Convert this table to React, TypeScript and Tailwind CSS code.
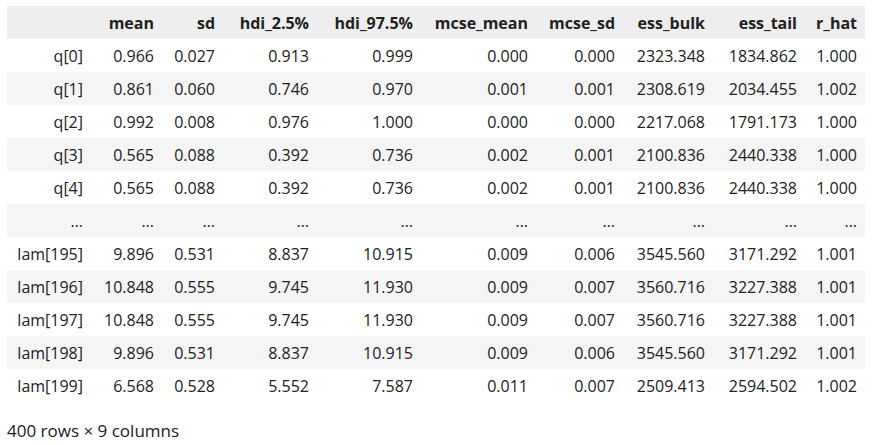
import React from 'react';

const columns = ['mean', 'sd', 'hdi_2.5%', 'hdi_97.5%', 'mcse_mean', 'mcse_sd', 'ess_bulk', 'ess_tail', 'r_hat'];

const widths = ['w-[84px]', 'w-[71px]', 'w-[61px]', 'w-[94px]', 'w-[104px]', 'w-[115px]', 'w-[87px]', 'w-[90px]', 'w-[92px]', 'w-[60px]'];

const rows: [string, string[]][] = [
  ['q[0]', ['0.966', '0.027', '0.913', '0.999', '0.000', '0.000', '2323.348', '1834.862', '1.000']],
  ['q[1]', ['0.861', '0.060', '0.746', '0.970', '0.001', '0.001', '2308.619', '2034.455', '1.002']],
  ['q[2]', ['0.992', '0.008', '0.976', '1.000', '0.000', '0.000', '2217.068', '1791.173', '1.000']],
  ['q[3]', ['0.565', '0.088', '0.392', '0.736', '0.002', '0.001', '2100.836', '2440.338', '1.000']],
  ['q[4]', ['0.565', '0.088', '0.392', '0.736', '0.002', '0.001', '2100.836', '2440.338', '1.000']],
  ['...', ['...', '...', '...', '...', '...', '...', '...', '...', '...']],
  ['lam[195]', ['9.896', '0.531', '8.837', '10.915', '0.009', '0.006', '3545.560', '3171.292', '1.001']],
  ['lam[196]', ['10.848', '0.555', '9.745', '11.930', '0.009', '0.007', '3560.716', '3227.388', '1.001']],
  ['lam[197]', ['10.848', '0.555', '9.745', '11.930', '0.009', '0.007', '3560.716', '3227.388', '1.001']],
  ['lam[198]', ['9.896', '0.531', '8.837', '10.915', '0.009', '0.006', '3545.560', '3171.292', '1.001']],
  ['lam[199]', ['6.568', '0.528', '5.552', '7.587', '0.011', '0.007', '2509.413', '2594.502', '1.002']],
];

export default function App() {
  return (
    <div className="min-h-screen bg-white pl-[7px] pt-[6px] text-[16px] text-[#222] font-['Open_Sans','Noto_Sans',sans-serif]">
      {/* Summary dataframe */}
      <table className="table-fixed w-[858px] border-collapse">
        <colgroup>
          {widths.map((w, i) => (
            <col key={i} className={w} />
          ))}
        </colgroup>
        <thead>
          <tr className="h-[33px] bg-[#eeeeee]">
            <th className="pr-2"></th>
            {columns.map((c) => (
              <th key={c} className="pr-2 text-right font-bold leading-6">
                {c}
              </th>
            ))}
          </tr>
        </thead>
        <tbody>
          {rows.map(([label, vals], i) => (
            <tr key={i} className={`h-[33px] ${i % 2 === 1 ? 'bg-[#f5f5f5]' : 'bg-white'}`}>
              <th className="pr-2 text-right font-normal leading-6">
                {label === '...' ? '…' : label}
              </th>
              {vals.map((v, j) => (
                <td key={j} className="pr-2 text-right leading-6 whitespace-nowrap">
                  {v === '...' ? '…' : v}
                </td>
              ))}
            </tr>
          ))}
        </tbody>
      </table>
      <p className="mt-[17px] text-[17px] leading-6">400 rows × 9 columns</p>
    </div>
  );
}
